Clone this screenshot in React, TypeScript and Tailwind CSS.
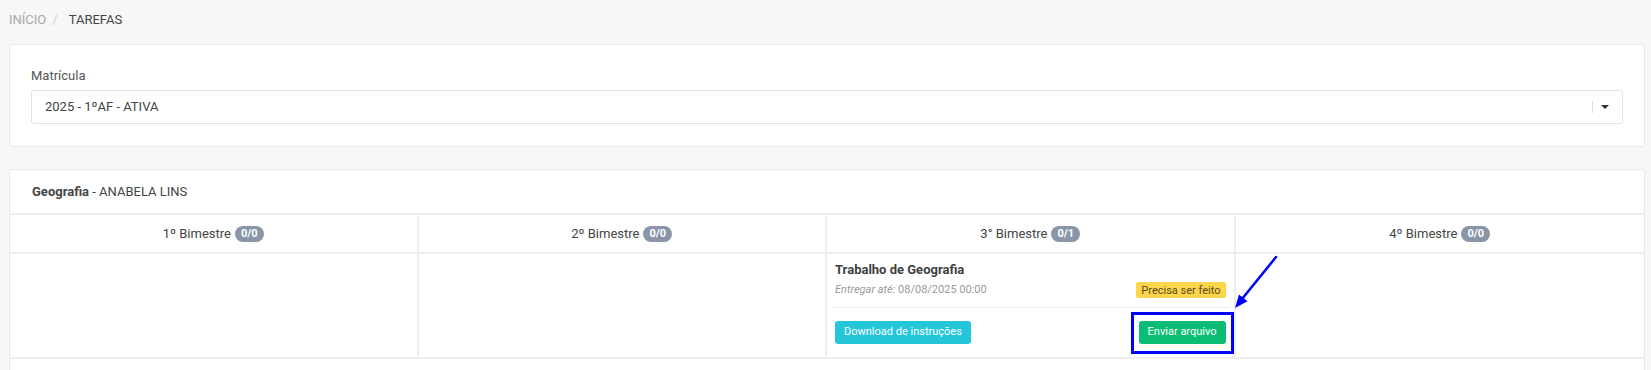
import type { ReactNode } from 'react'

type Bimestre = {
  label: string
  count: string
}

const bimestres: Bimestre[] = [
  { label: '1º Bimestre', count: '0/0' },
  { label: '2º Bimestre', count: '0/0' },
  { label: '3° Bimestre', count: '0/1' },
  { label: '4º Bimestre', count: '0/0' },
]

function CountBadge({ children }: { children: ReactNode }) {
  return (
    <span className="ml-[4px] inline-flex h-[16px] items-center rounded-full bg-[#8a96a8] px-[6px] text-[11px] font-bold leading-none text-white">
      {children}
    </span>
  )
}

function TaskItem() {
  return (
    <div className="flex h-full flex-col">
      <div className="border-b border-[#eeeeee] px-[4px] pb-[8px] pt-[3px]">
        <p className="text-[13px] font-bold leading-[18px] text-[#3f3f3f]">Trabalho de Geografia</p>
        <div className="mt-[2px] flex items-center justify-between">
          <p className="text-[11px] leading-[18px] text-[#9a9a9a]">
            <i>Entregar até:</i> 08/08/2025 00:00
          </p>
          <span className="inline-flex h-[16px] items-center rounded-[2px] bg-[#fdd64b] px-[5px] text-[11px] leading-none text-[#5b4c1c]">
            Precisa ser feito
          </span>
        </div>
      </div>
      <div className="flex flex-1 items-center justify-between px-[4px] pt-[3px]">
        <button className="h-[23px] rounded-[3px] bg-[#26c6da] px-[9px] text-[11px] text-white">Download de instruções</button>
        <span className="relative inline-flex">
          <button className="h-[23px] rounded-[3px] bg-[#0bbd74] px-[9px] text-[11px] text-white">Enviar arquivo</button>
          {/* marcação em azul por cima do botão */}
          <span className="pointer-events-none absolute -bottom-[10px] -left-[8px] -right-[8px] -top-[9px] border-[3px] border-[#0000ff]" />
          <svg className="pointer-events-none absolute left-[90px] top-[-70px] h-[65px] w-[55px]" viewBox="0 0 55 65">
            <line x1="47" y1="6" x2="13" y2="48" stroke="#0000ff" strokeWidth="2.5" strokeLinecap="round" />
            <polygon points="6,57 18.5,50.3 10,43.4" fill="#0000ff" />
          </svg>
        </span>
      </div>
    </div>
  )
}

export default function App() {
  return (
    <div className="min-h-[370px] bg-[#f7f7f7] pl-[9px] pr-[6px] font-['Roboto','Liberation_Sans',sans-serif]">
      <nav className="flex h-[44px] items-start pt-[11px] text-[13px] leading-[18px]">
        <span className="text-[#a8a8a8]">INÍCIO</span>
        <span className="pl-[6px] pr-[11px] text-[#cccccc]">/</span>
        <span className="text-[#444444]">TAREFAS</span>
      </nav>

      <div className="rounded-[3px] border border-[#e9e9e9] bg-white px-[21px] py-[22px]">
        <label className="mb-[5px] block text-[13px] leading-[18px] text-[#555555]">Matrícula</label>
        <div className="flex h-[34px] items-center rounded-[3px] border border-[#e3e3e3] pl-[13px] pr-[13px] text-[13px] text-[#444444]">
          <span className="flex-1">2025 - 1ºAF - ATIVA</span>
          <span className="h-[12px] w-px bg-[#dddddd]" />
          <span className="ml-[8px] h-0 w-0 border-l-[4px] border-r-[4px] border-t-[4px] border-l-transparent border-r-transparent border-t-[#333333]" />
        </div>
      </div>

      <div className="mt-[22px] rounded-[3px] border border-[#e9e9e9] bg-white">
        <div className="flex h-[45px] items-center border-b-2 border-[#eeeeee] px-[22px] text-[13px] text-[#444444]">
          <span className="font-bold">Geografia</span>
          <span>&nbsp;- ANABELA LINS</span>
        </div>

        <div className="grid grid-cols-4 border-b-2 border-[#eeeeee]">
          {bimestres.map((b, i) => (
            <div
              key={b.label}
              className={`flex h-[39px] items-center justify-center border-b-2 border-[#eeeeee] text-[13px] text-[#444444] ${i < 3 ? 'border-r-2' : ''}`}
            >
              {b.label}
              <CountBadge>{b.count}</CountBadge>
            </div>
          ))}
          {bimestres.map((b, i) => (
            <div key={b.label + '-body'} className={`h-[103px] border-[#eeeeee] p-[4px] ${i < 3 ? 'border-r-2' : ''}`}>
              {i === 2 && <TaskItem />}
            </div>
          ))}
        </div>
        <div className="h-[30px]" />
      </div>
    </div>
  )
}
